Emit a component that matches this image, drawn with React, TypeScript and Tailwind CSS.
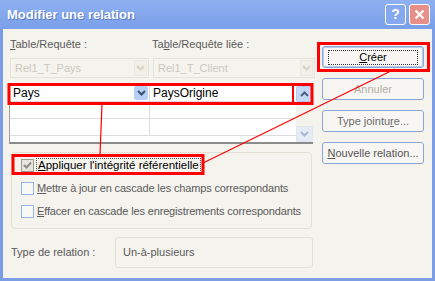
import React from "react";

const font = { fontFamily: "'Liberation Sans', Arial, sans-serif" };

function Chevron({ up = false, color = "#4d6185" }: { up?: boolean; color?: string }) {
  return (
    <svg width="9" height="6" viewBox="0 0 9 6" aria-hidden>
      <path
        d={up ? "M1 5 L4.5 1.5 L8 5" : "M1 1 L4.5 4.5 L8 1"}
        fill="none"
        stroke={color}
        strokeWidth="2"
      />
    </svg>
  );
}

function XpButton({ label, className = "" }: { label: React.ReactNode; className?: string }) {
  return (
    <div
      className={
        "flex h-[22px] w-[102px] items-center justify-center whitespace-nowrap rounded-[3px] border border-[#8aa4d4] bg-[#f7f6f2] text-[11px] " +
        className
      }
    >
      {label}
    </div>
  );
}

function Check({ checked = false }: { checked?: boolean }) {
  return (
    <span
      className={
        "flex h-[13px] w-[13px] shrink-0 items-center justify-center border " +
        (checked ? "border-[#9c9a94] bg-[#e6e4dc]" : "border-[#98b4e6] bg-[#f8f8f4]")
      }
    >
      {checked && (
        <svg width="9" height="9" viewBox="0 0 9 9" aria-hidden>
          <path d="M1 4 L3.5 6.5 L8 1.5" fill="none" stroke="#8e8c86" strokeWidth="2" />
        </svg>
      )}
    </span>
  );
}

export default function App() {
  return (
    <div className="relative h-[281px] w-[435px] overflow-hidden bg-[#7a9de6] select-none" style={font}>
      {/* title bar */}
      <div className="flex h-[29px] items-center justify-between bg-gradient-to-b from-[#8fb0f0] to-[#7a9fea] pl-[7px] pr-[5px]">
        <span className="text-[13px] font-bold text-white [text-shadow:1px_1px_0_#5c7bc0]">Modifier une relation</span>
        <div className="flex gap-[3px]">
          <span className="flex h-[21px] w-[21px] items-center justify-center rounded-[3px] border border-white bg-[#86a8ee] text-[14px] font-bold text-white">
            ?
          </span>
          <span className="flex h-[21px] w-[21px] items-center justify-center rounded-[3px] border border-white bg-[#e88f8a]">
            <svg width="11" height="11" viewBox="0 0 11 11" aria-hidden>
              <path d="M1.5 1.5 L9.5 9.5 M9.5 1.5 L1.5 9.5" stroke="white" strokeWidth="2.2" />
            </svg>
          </span>
        </div>
      </div>

      {/* body */}
      <div className="mx-[3px] flex h-[249px] whitespace-nowrap bg-[#f5f3ee] text-[11px] text-[#5a5a5a]">
        {/* left column */}
        <div className="flex w-[312px] flex-col pl-[6px] pt-[9px]">
          <div className="flex h-[13px] items-center">
            <span className="w-[143px] pl-[1px]">
              <u>T</u>able/Requête :
            </span>
            <span>
              Ta<u>b</u>le/Requête liée :
            </span>
          </div>

          <div className="mt-[7px] flex h-[20px] gap-[4px] pl-[1px]">
            <div className="flex w-[139px] items-center justify-between border border-[#e4e2da] bg-[#f5f3ee] pl-[4px] pr-[1px] text-[#cbc8bd]">
              Rel1_T_Pays
              <span className="flex h-[16px] w-[13px] items-center justify-center border border-[#ece9e0] bg-[#f1efe8]">
                <Chevron color="#d6d3c8" />
              </span>
            </div>
            <div className="flex flex-1 items-center justify-between border border-[#e4e2da] bg-[#f5f3ee] pl-[4px] pr-[1px] text-[#cbc8bd]">
              Rel1_T_Client
              <span className="flex h-[16px] w-[13px] items-center justify-center border border-[#ece9e0] bg-[#f1efe8]">
                <Chevron color="#d6d3c8" />
              </span>
            </div>
          </div>

          {/* grid */}
          <div className="mt-[6px] flex h-[60px] w-[304px] border-b-[2px] border-l border-t border-[#a0a0a0] border-b-[#8c8c8c] bg-white text-[12px] text-black">
            <div className="flex flex-1 flex-col">
              {["Pays", "", ""].map((v, i) => (
                <div key={i} className="flex h-[17px] border-b border-[#dcdcdc]">
                  <div className="flex w-[140px] items-center justify-between border-r border-[#dcdcdc] pl-[3px] pr-[1px]">
                    <span>{v}</span>
                    {i === 0 && (
                      <span className="flex h-[14px] w-[14px] items-center justify-center rounded-[2px] bg-[#b8d0f6]">
                        <Chevron color="#39506f" />
                      </span>
                    )}
                  </div>
                  <div className="flex items-center pl-[3px]">{i === 0 ? "PaysOrigine" : ""}</div>
                </div>
              ))}
            </div>
            <div className="flex w-[17px] flex-col justify-between bg-[#f3f2ed] pt-[1px]">
              <span className="flex h-[16px] items-center justify-center rounded-[2px] border border-[#b4c8ee] bg-[#c6d8f8]">
                <Chevron up color="#4d6185" />
              </span>
              <span className="flex h-[16px] items-center justify-center rounded-[2px] border border-[#dfe6f2] bg-[#e6ecf6]">
                <Chevron color="#a8b8d4" />
              </span>
            </div>
          </div>

          {/* group box */}
          <div className="ml-[2px] mt-[8px] flex h-[77px] w-[301px] flex-col gap-[10px] rounded-[4px] border border-[#e2dfd4] pl-[9px] pt-[6px] tracking-[-0.15px]">
            <div className="flex h-[13px] items-center gap-[2px]">
              <Check checked />
              <span className="border border-dotted border-[#555] px-[1px] text-[11.5px] leading-[13px] tracking-normal text-black">
                <u>A</u>ppliquer l'intégrité référentielle
              </span>
            </div>
            <div className="flex h-[13px] items-center gap-[3px]">
              <Check />
              <span>
                <u>M</u>ettre à jour en cascade les champs correspondants
              </span>
            </div>
            <div className="flex h-[13px] items-center gap-[3px]">
              <Check />
              <span>
                <u>E</u>ffacer en cascade les enregistrements correspondants
              </span>
            </div>
          </div>

          <div className="mt-[8px] flex items-center">
            <span className="w-[106px] pl-[2px]">Type de relation :</span>
            <div className="flex h-[31px] w-[198px] items-center rounded-[3px] border border-[#e2dfd4] pl-[7px]">
              Un-à-plusieurs
            </div>
          </div>
        </div>

        {/* right column */}
        <div className="flex flex-col gap-[10px] pl-[7px] pt-[17px]">
          <XpButton
            className="border-[#2d4f86] text-black shadow-[inset_0_0_0_1px_#b8cdf4]"
            label={
              <span className="border border-dotted border-[#333] px-[30px] leading-[13px]">
                <u>C</u>réer
              </span>
            }
          />
          <XpButton className="text-[#b2afa4]" label="Annuler" />
          <XpButton
            className="text-[#6b6b6b]"
            label={
              <span>
                Type jointu<u>r</u>e...
              </span>
            }
          />
          <XpButton
            className="text-[#555]"
            label={
              <span>
                <u>N</u>ouvelle relation...
              </span>
            }
          />
        </div>
      </div>

      {/* annotation overlay */}
      <svg className="pointer-events-none absolute left-0 top-0" width="435" height="281" aria-hidden>
        <rect x="9" y="84.5" width="303" height="19" fill="none" stroke="#ff0000" strokeWidth="3" />
        <line x1="293" y1="84" x2="293" y2="104" stroke="#ff0000" strokeWidth="2" />
        <rect x="13" y="155.5" width="190" height="18" fill="none" stroke="#ff0000" strokeWidth="3" />
        <rect x="318.5" y="43.5" width="110" height="27" fill="none" stroke="#ff0000" strokeWidth="3" />
        <line x1="102" y1="104" x2="100" y2="155" stroke="#ff0000" strokeWidth="1.2" />
        <line x1="395" y1="69" x2="203" y2="163" stroke="#ff0000" strokeWidth="1.2" />
      </svg>
    </div>
  );
}
